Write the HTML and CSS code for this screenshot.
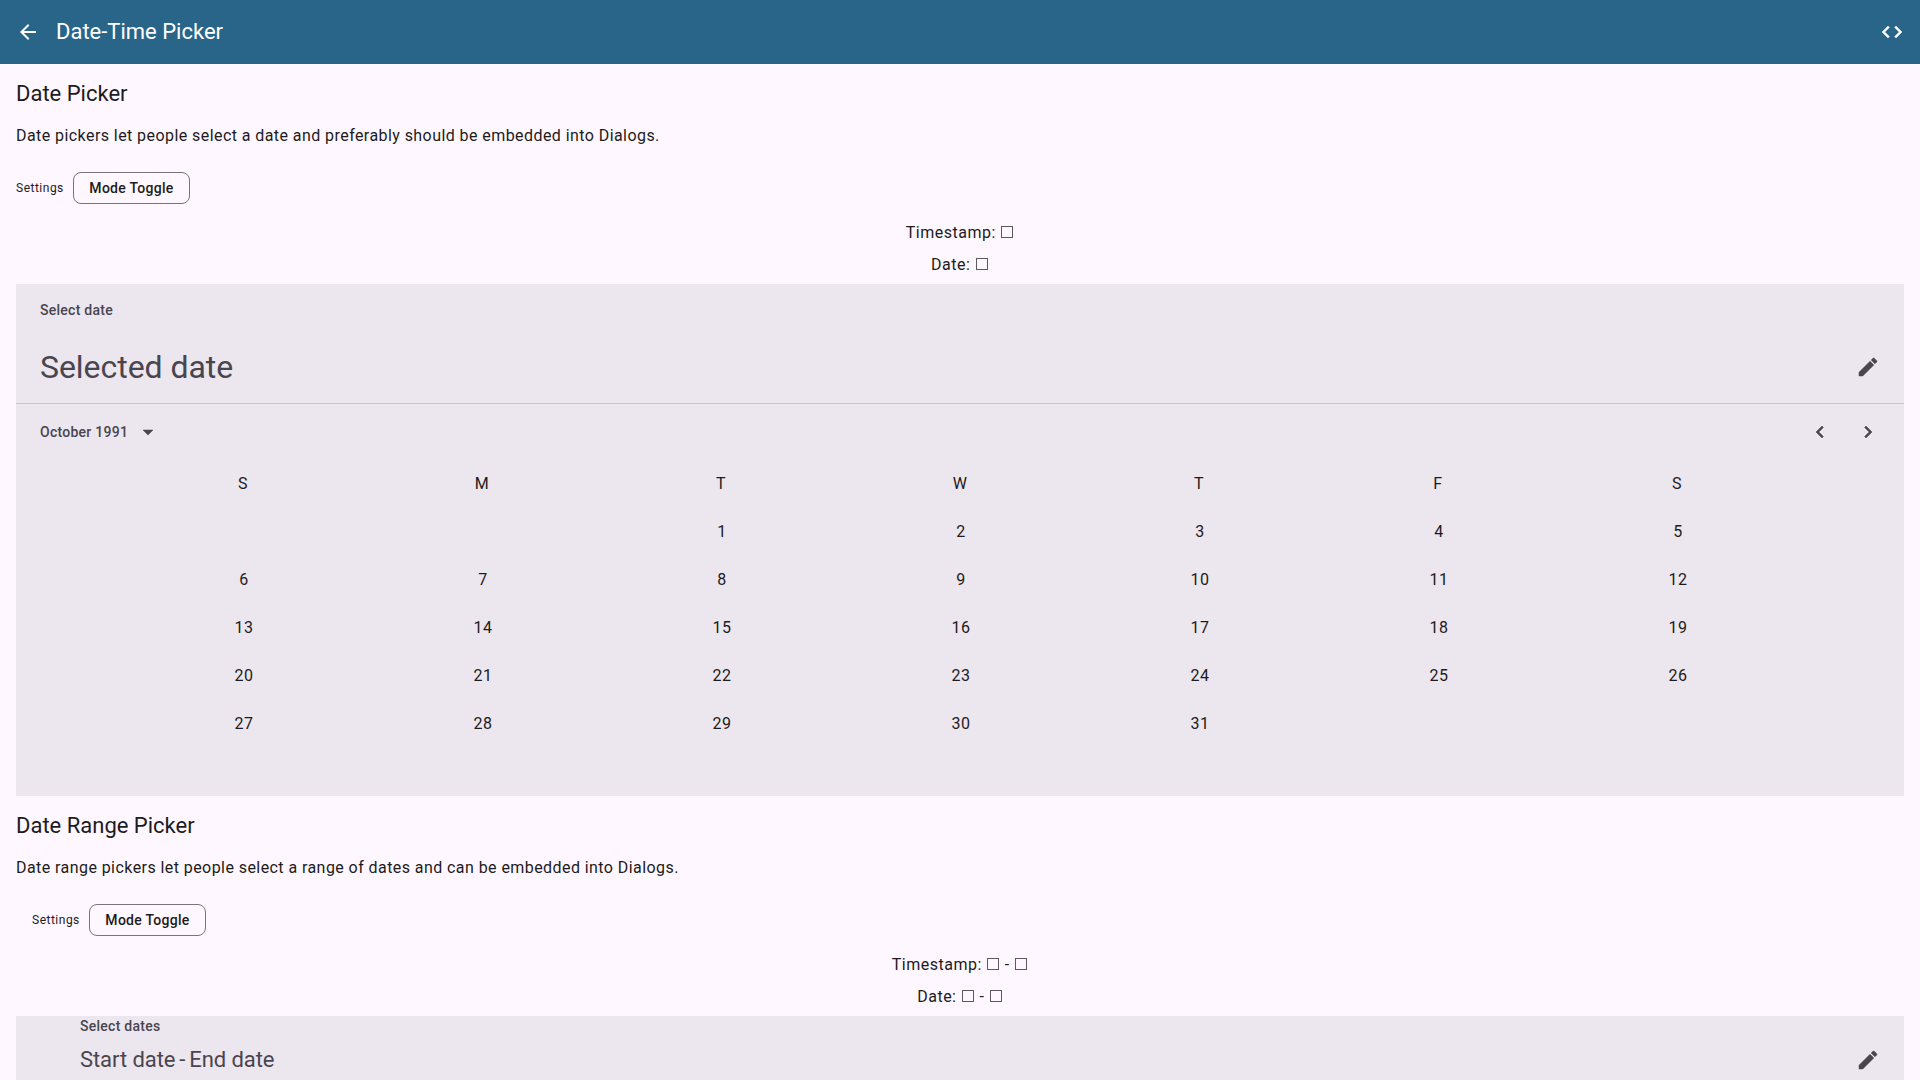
FILE: index.html
```html
<!DOCTYPE html>
<html lang="en">
<head>
<meta charset="utf-8">
<title>Date-Time Picker</title>
<link rel="stylesheet" href="styles.css">
</head>
<body>
<header class="app-bar">
  <svg class="icon" viewBox="0 0 24 24"><path d="M20 11H7.83l5.59-5.59L12 4l-8 8 8 8 1.41-1.41L7.83 13H20v-2z"/></svg>
  <h1 class="app-title">Date-Time Picker</h1>
  <svg class="icon icon-strong" viewBox="0 0 24 24"><path d="M9.4 16.6 4.8 12l4.6-4.6L8 6l-6 6 6 6 1.4-1.4zm5.2 0 4.6-4.6-4.6-4.6L16 6l6 6-6 6-1.4-1.4z"/></svg>
</header>
<main class="content">
  <section class="section">
    <h2 class="title">Date Picker</h2>
    <p class="description">Date pickers let people select a date and preferably should be embedded into Dialogs.</p>
    <div class="settings"><span class="settings-label">Settings</span><button class="chip">Mode Toggle</button></div>
    <p class="value">Timestamp: <span class="box"></span></p>
    <p class="value">Date: <span class="box"></span></p>
    <div class="picker">
      <div class="picker-head">
        <div class="picker-label">Select date</div>
        <div class="headline-row">
          <div class="headline">Selected date</div>
          <svg class="icon icon-strong" viewBox="0 0 24 24"><path d="M3 17.25V21h3.75L17.81 9.94l-3.75-3.75L3 17.25zM20.71 7.04a1 1 0 0 0 0-1.41l-2.34-2.34a1 1 0 0 0-1.41 0l-1.83 1.83 3.75 3.75 1.83-1.83z"/></svg>
        </div>
      </div>
      <div class="month-row">
        <span class="month">October 1991</span>
        <svg class="icon icon-strong" viewBox="0 0 24 24"><path d="m7 10 5 5 5-5z"/></svg>
        <div class="month-nav">
          <svg class="icon icon-strong" viewBox="0 0 24 24"><path d="M15.41 7.41 14 6l-6 6 6 6 1.41-1.41L10.83 12z"/></svg>
          <svg class="icon icon-strong" viewBox="0 0 24 24"><path d="M10 6 8.59 7.41 13.17 12l-4.58 4.59L10 18l6-6z"/></svg>
        </div>
      </div>
      <div class="calendar">
        <div class="week weekdays"><span>S</span><span>M</span><span>T</span><span>W</span><span>T</span><span>F</span><span>S</span></div>
        <div class="week"><span></span><span></span><span>1</span><span>2</span><span>3</span><span>4</span><span>5</span></div>
        <div class="week"><span>6</span><span>7</span><span>8</span><span>9</span><span>10</span><span>11</span><span>12</span></div>
        <div class="week"><span>13</span><span>14</span><span>15</span><span>16</span><span>17</span><span>18</span><span>19</span></div>
        <div class="week"><span>20</span><span>21</span><span>22</span><span>23</span><span>24</span><span>25</span><span>26</span></div>
        <div class="week"><span>27</span><span>28</span><span>29</span><span>30</span><span>31</span><span></span><span></span></div>
      </div>
    </div>
  </section>
  <section class="section">
    <h2 class="title">Date Range Picker</h2>
    <p class="description">Date range pickers let people select a range of dates and can be embedded into Dialogs.</p>
    <div class="settings settings-inset"><span class="settings-label">Settings</span><button class="chip">Mode Toggle</button></div>
    <p class="value">Timestamp: <span class="box"></span> - <span class="box"></span></p>
    <p class="value">Date: <span class="box"></span> - <span class="box"></span></p>
    <div class="picker range">
      <div class="picker-label">Select dates</div>
      <div class="headline-row">
        <div class="headline">Start date<span class="dash"> - </span>End date</div>
        <svg class="icon icon-strong" viewBox="0 0 24 24"><path d="M3 17.25V21h3.75L17.81 9.94l-3.75-3.75L3 17.25zM20.71 7.04a1 1 0 0 0 0-1.41l-2.34-2.34a1 1 0 0 0-1.41 0l-1.83 1.83 3.75 3.75 1.83-1.83z"/></svg>
      </div>
    </div>
  </section>
</main>
</body>
</html>
```
FILE: styles.css
```css
* { box-sizing: border-box; }
html { height: 100%; overflow: hidden; }
body {
  margin: 0;
  height: 100%;
  overflow: hidden;
  background: #fef7ff;
  color: #1d1b20;
  font-family: Roboto, sans-serif;
  font-size: 16px;
  letter-spacing: 0.5px;
}
h1, h2, p { margin: 0; font-weight: 400; }
.icon { width: 24px; height: 24px; fill: currentColor; flex: none; display: block; }
.icon-strong { stroke: currentColor; stroke-width: 0.5px; }
.app-bar {
  height: 64px;
  padding: 0 16px;
  display: flex;
  align-items: center;
  background: #286589;
  color: #fff;
}
.app-title { flex: 1; margin-left: 16px; font-size: 22px; line-height: 28px; letter-spacing: 0; }
.content { padding: 0 16px; }
.title { height: 60px; padding-top: 16px; font-size: 22px; line-height: 28px; letter-spacing: 0; }
.description { height: 40px; line-height: 24px; letter-spacing: 0.43px; }
.settings { height: 48px; display: flex; align-items: center; gap: 9px; }
.settings-inset { padding-left: 16px; }
.settings-label { font-size: 12px; line-height: 16px; width: 48px; white-space: nowrap; }
.chip {
  width: 117px;
  height: 32px;
  padding: 0;
  border: 1px solid #79747e;
  border-radius: 8px;
  background: transparent;
  color: #1d1b20;
  font: 500 14px/20px Roboto, sans-serif;
  letter-spacing: 0.28px;
}
.value { height: 32px; line-height: 32px; text-align: center; }
.value:nth-of-type(2) { margin-top: 5px; }
.box { display: inline-block; width: 12px; height: 12px; border: 1px solid #5b585e; margin: 0 1px; }
.picker { height: 512px; margin-top: 3px; background: #ece6ee; color: #49454f; }
.picker-head { height: 120px; padding: 16px 24px 0; border-bottom: 1px solid #cac4d0; }
.picker-label { font-size: 14px; line-height: 20px; font-weight: 500; letter-spacing: 0.26px; }
.headline-row { display: flex; align-items: center; justify-content: space-between; }
.headline { font-size: 32px; line-height: 40px; letter-spacing: -0.05px; }
.picker-head .headline-row { margin-top: 27px; }
.month-row { height: 56px; padding: 0 24px; display: flex; align-items: center; font-size: 14px; font-weight: 500; letter-spacing: 0.26px; }
.month { margin-right: 8px; }
.month-nav { display: flex; gap: 24px; margin-left: auto; }
.calendar { padding: 0 12px; color: #1d1b20; }
.week { display: flex; justify-content: space-evenly; }
.week span { width: 48px; height: 48px; padding-left: 2px; line-height: 48px; text-align: center; }
.weekdays span { padding-left: 0; }
.range { height: 64px; padding: 0 24px 0 64px; }
.range .headline { font-size: 22px; line-height: 28px; letter-spacing: -0.07px; }
.range .headline-row { margin-top: 10px; }
.dash { word-spacing: -1.5px; }
```
